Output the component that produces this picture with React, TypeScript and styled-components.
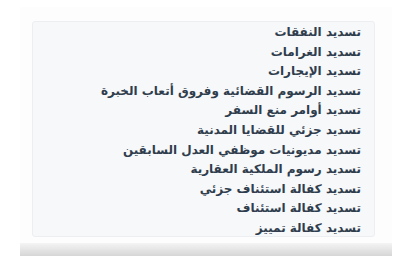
import styled, { createGlobalStyle } from 'styled-components';

const GlobalStyle = createGlobalStyle`
  html, body {
    margin: 0;
    padding: 0;
    background: #ffffff;
  }
`

const Page = styled.div`
  width: 398px;
  height: 260px;
  padding: 7px 6px 0 20px;
  box-sizing: border-box;
`

const Frame = styled.div`
  height: 249px;
  display: flex;
  flex-direction: column;
  background: #fdfdfd;
`

const Body = styled.div`
  flex: 1;
  padding: 14px 17px 0 12px;
`

const Panel = styled.ul`
  margin: 0;
  list-style: none;
  direction: rtl;
  background: #f7f8fa;
  border: 1px solid #eceef1;
  border-radius: 3px;
  height: 216px;
  box-sizing: border-box;
  padding: 1px 13px 0 0;
  overflow: hidden;
`

const Item = styled.li`
  font-family: "DejaVu Sans", sans-serif;
  font-weight: bold;
  font-size: 12px;
  line-height: 19.6px;
  height: 19.6px;
  color: #2f3d4d;
  text-align: right;
  white-space: nowrap;
`

const BottomBar = styled.div`
  height: 13px;
  background: linear-gradient(#f4f4f4, #d6d6d6);
`

const items = [
  'تسديد النفقات',
  'تسديد الغرامات',
  'تسديد الإيجارات',
  'تسديد الرسوم القضائية وفروق أتعاب الخبرة',
  'تسديد أوامر منع السفر',
  'تسديد جزئي للقضايا المدنية',
  'تسديد مديونيات موظفي العدل السابقين',
  'تسديد رسوم الملكية العقارية',
  'تسديد كفالة استئناف جزئي',
  'تسديد كفالة استئناف',
  'تسديد كفالة تمييز',
]

const App = () => {
  return (
    <Page>
      <GlobalStyle />
      <Frame>
        <Body>
          <Panel>
            {items.map(it => <Item key={it}>{it}</Item>)}
          </Panel>
        </Body>
        <BottomBar />
      </Frame>
    </Page>
  );
}

export default App;
